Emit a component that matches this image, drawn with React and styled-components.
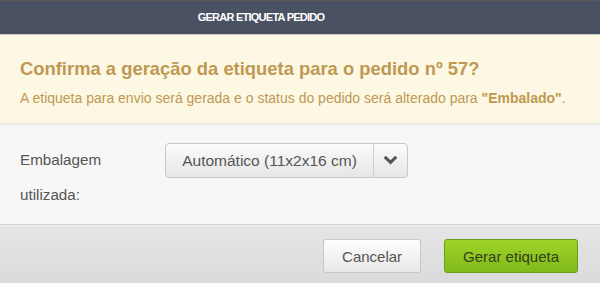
import React, { useState } from 'react';
import styled, { createGlobalStyle } from 'styled-components';

const GlobalStyle = createGlobalStyle`
  html, body {
    margin: 0;
    padding: 0;
    background: #f7f7f7;
    font-family: "Liberation Sans", Arial, Helvetica, sans-serif;
  }
`;

const GerarEtiqueta = () => {
  const [embalagem] = useState('Automático (11x2x16 cm)');

  return (
    <Modal>
      <GlobalStyle />
      <Header>GERAR ETIQUETA PEDIDO</Header>
      <Alert>
        <AlertTitle>Confirma a geração da etiqueta para o pedido nº 57?</AlertTitle>
        <AlertText>
          A etiqueta para envio será gerada e o status do pedido será alterado para{' '}
          <strong>"Embalado"</strong>.
        </AlertText>
      </Alert>
      <Body>
        <FieldRow>
          <Label>Embalagem utilizada:</Label>
          <Select type="button">
            <SelectValue>{embalagem}</SelectValue>
            <SelectCaret>
              <svg width="13" height="9" viewBox="0 0 13 9">
                <polyline
                  points="1.8,1.8 6.5,6.4 11.2,1.8"
                  fill="none"
                  stroke="#555"
                  strokeWidth="3"
                  strokeLinecap="square"
                />
              </svg>
            </SelectCaret>
          </Select>
        </FieldRow>
      </Body>
      <Footer>
        <Button type="button">Cancelar</Button>
        <Button type="button" $primary>Gerar etiqueta</Button>
      </Footer>
    </Modal>
  );
};

export default GerarEtiqueta;

const Modal = styled.div`
  width: 600px;
  height: 283px;
  display: flex;
  flex-direction: column;
  overflow: hidden;
  background: #f7f7f7;
`;

const Header = styled.div`
  height: 33px;
  border-top: 1px solid #5b5752;
  border-bottom: 1px solid #c9c9c9;
  background: #4a5162;
  color: #fff;
  font-size: 11px;
  font-weight: bold;
  letter-spacing: -0.75px;
  line-height: 33px;
  text-align: center;
  padding-right: 78px;
`;

const Alert = styled.div`
  height: 90px;
  box-sizing: border-box;
  padding: 23px 20px 0;
  background: #fcf8e3;
  border-bottom: 2px solid #ebe9e0;
  color: #c09853;
`;

const AlertTitle = styled.h3`
  margin: 0 0 9px;
  font-size: 18.4px;
  line-height: 22px;
  font-weight: bold;
`;

const AlertText = styled.p`
  margin: 0;
  font-size: 14px;
  line-height: 18px;

  strong {
    font-weight: bold;
  }
`;

const Body = styled.div`
  height: 100px;
  box-sizing: border-box;
  padding: 17px 20px 0;
  background: #f7f7f7;
  border-bottom: 1px solid #d2d2d2;
`;

const FieldRow = styled.div`
  display: flex;
  align-items: flex-start;
`;

const Label = styled.label`
  width: 125px;
  margin-right: 20px;
  font-size: 15.2px;
  line-height: 35px;
  color: #555;
`;

const Select = styled.button`
  width: 243px;
  height: 35px;
  margin-top: 1px;
  padding: 0;
  display: flex;
  align-items: stretch;
  border: 1px solid #c8c8c8;
  border-radius: 4px;
  background: linear-gradient(#fbfbfb, #e6e6e6);
  font-family: inherit;
  cursor: pointer;
`;

const SelectValue = styled.span`
  flex: 1;
  display: flex;
  align-items: center;
  justify-content: center;
  font-size: 15.5px;
  color: #555;
`;

const SelectCaret = styled.span`
  width: 33px;
  display: flex;
  align-items: center;
  justify-content: center;
  border-left: 1px solid #cfcfcf;
`;

const Footer = styled.div`
  flex: 1;
  display: flex;
  justify-content: flex-end;
  align-items: flex-start;
  gap: 23px;
  padding: 13px 22px 0 0;
  border-top: 1px solid #f0f0f0;
  background: linear-gradient(#e6e6e6, #dadada);
`;

const Button = styled.button`
  height: 34px;
  padding: 0 18px;
  border: 1px solid ${(p) => (p.$primary ? '#6c9c17' : '#c8c8c8')};
  border-radius: 3px;
  background: ${(p) =>
    p.$primary
      ? 'linear-gradient(#9fd427, #80b91c)'
      : 'linear-gradient(#fdfdfd, #e8e8e8)'};
  color: ${(p) => (p.$primary ? '#33401c' : '#555')};
  font-family: inherit;
  font-size: 15px;
  cursor: pointer;
`;
